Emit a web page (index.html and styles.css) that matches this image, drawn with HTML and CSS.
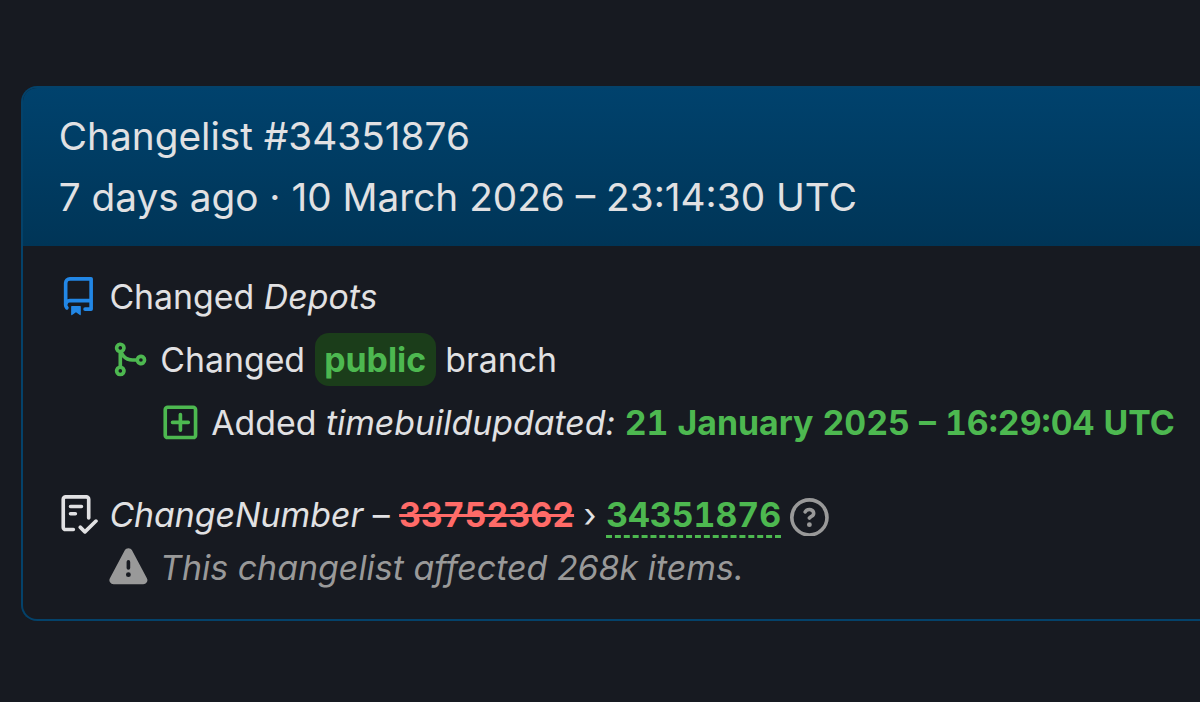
FILE: index.html
```html
<!DOCTYPE html>
<html lang="en">
<head>
    <meta charset="UTF-8">
    <meta name="viewport" content="width=device-width, initial-scale=1.0">
    <title>Changelist #34351876</title>
    <link rel="stylesheet" href="styles.css">
</head>
<body>
    <div class="panel">
        <header class="panel-heading">
            <div>Changelist #34351876</div>
            <div>7 days ago · 10 March 2026 – 23:14:30 UTC</div>
        </header>

        <div class="panel-body">
            <ul class="history">
                <li>
                    <div class="row">
                        <svg class="icon blue" viewBox="0 0 16 16"><path d="M2 2.5A2.5 2.5 0 0 1 4.5 0h8.75a.75.75 0 0 1 .75.75v12.5a.75.75 0 0 1-.75.75h-2.5a.75.75 0 0 1 0-1.5h1.75v-2h-8a1 1 0 0 0-.714 1.7.75.75 0 1 1-1.072 1.05A2.495 2.495 0 0 1 2 11.5Zm10.5-1h-8a1 1 0 0 0-1 1v6.708A2.486 2.486 0 0 1 4.5 9h8ZM5 12.25a.25.25 0 0 1 .25-.25h3.5a.25.25 0 0 1 .25.25v3.25a.25.25 0 0 1-.4.2l-1.45-1.087a.249.249 0 0 0-.3 0L5.4 15.7a.25.25 0 0 1-.4-.2Z"/></svg>
                        <span>Changed <i>Depots</i></span>
                    </div>
                    <ul>
                        <li>
                            <div class="row">
                                <svg class="icon green" viewBox="0 0 16 16"><path d="M5.45 5.154A4.25 4.25 0 0 0 9.25 7.5h1.378a2.251 2.251 0 1 1 0 1.5H9.25A5.734 5.734 0 0 1 5 7.123v3.505a2.25 2.25 0 1 1-1.5 0V5.372a2.25 2.25 0 1 1 1.95-.218ZM4.25 13.5a.75.75 0 1 0 0-1.5.75.75 0 0 0 0 1.5Zm8.5-4.5a.75.75 0 1 0 0-1.5.75.75 0 0 0 0 1.5ZM5 3.25a.75.75 0 1 0 0 .005V3.25Z"/></svg>
                                <span>Changed <b class="branch">public</b> branch</span>
                            </div>
                            <ul>
                                <li>
                                    <div class="row">
                                        <svg class="icon green" viewBox="0 0 16 16"><path d="M2.75 1h10.5c.966 0 1.75.784 1.75 1.75v10.5A1.75 1.75 0 0 1 13.25 15H2.75A1.75 1.75 0 0 1 1 13.25V2.75C1 1.784 1.784 1 2.75 1Zm10.5 1.5H2.75a.25.25 0 0 0-.25.25v10.5c0 .138.112.25.25.25h10.5a.25.25 0 0 0 .25-.25V2.75a.25.25 0 0 0-.25-.25ZM8 4a.75.75 0 0 1 .75.75v2.5h2.5a.75.75 0 0 1 0 1.5h-2.5v2.5a.75.75 0 0 1-1.5 0v-2.5h-2.5a.75.75 0 0 1 0-1.5h2.5v-2.5A.75.75 0 0 1 8 4Z"/></svg>
                                        <span>Added <i>timebuildupdated:</i> <b class="value green">21 January 2025 – 16:29:04 UTC</b></span>
                                    </div>
                                </li>
                            </ul>
                        </li>
                    </ul>
                </li>
                <li class="change-number">
                    <div class="row">
                        <svg class="icon" viewBox="0 0 16 16"><path d="M2.5 1.75v11.5c0 .138.112.25.25.25h3.17a.75.75 0 0 1 0 1.5H2.75A1.75 1.75 0 0 1 1 13.25V1.75C1 .784 1.784 0 2.75 0h8.5C12.216 0 13 .784 13 1.75v7.736a.75.75 0 0 1-1.5 0V1.75a.25.25 0 0 0-.25-.25h-8.5a.25.25 0 0 0-.25.25Zm13.274 9.537v-.001l-4.557 4.45a.75.75 0 0 1-1.055-.008l-1.943-1.95a.75.75 0 0 1 1.062-1.058l1.419 1.425 4.026-3.932a.75.75 0 1 1 1.048 1.074ZM4.75 4h4.5a.75.75 0 0 1 0 1.5h-4.5a.75.75 0 0 1 0-1.5ZM4 7.75A.75.75 0 0 1 4.75 7h2a.75.75 0 0 1 0 1.5h-2A.75.75 0 0 1 4 7.75Z"/></svg>
                        <span><i>ChangeNumber</i> – <del class="value">33752362</del> › <ins class="value">34351876</ins></span>
                        <svg class="icon help" viewBox="0 0 16 16"><path d="M0 8a8 8 0 1 1 16 0A8 8 0 0 1 0 8Zm8-6.5a6.5 6.5 0 1 0 0 13 6.5 6.5 0 0 0 0-13ZM6.92 6.085h.001a.749.749 0 1 1-1.342-.67c.169-.339.436-.701.849-.977C6.845 4.16 7.369 4 8 4a2.756 2.756 0 0 1 1.637.525c.503.377.863.965.863 1.725 0 .448-.115.83-.329 1.15-.205.307-.47.513-.692.662-.109.072-.22.138-.313.195l-.006.004a6.24 6.24 0 0 0-.26.16.952.952 0 0 0-.276.245.75.75 0 0 1-1.248-.832c.184-.264.42-.489.692-.661.103-.067.207-.132.313-.195l.007-.004c.1-.061.182-.11.258-.161a.969.969 0 0 0 .277-.245C8.96 6.514 9 6.427 9 6.25a.612.612 0 0 0-.262-.525A1.27 1.27 0 0 0 8 5.5c-.369 0-.595.09-.74.187a1.01 1.01 0 0 0-.34.398ZM9 11a1 1 0 1 1-2 0 1 1 0 0 1 2 0Z"/></svg>
                    </div>
                    <div class="row note">
                        <svg class="icon" viewBox="0 0 16 16"><path d="M6.457 1.047c.659-1.234 2.427-1.234 3.086 0l6.082 11.378A1.75 1.75 0 0 1 14.082 15H1.918a1.75 1.75 0 0 1-1.543-2.575ZM8 5a.75.75 0 0 0-.75.75v2.5a.75.75 0 0 0 1.5 0v-2.5A.75.75 0 0 0 8 5Zm1 6a1 1 0 1 0-2 0 1 1 0 0 0 2 0Z"/></svg>
                        <i>This changelist affected 268k items.</i>
                    </div>
                </li>
            </ul>
        </div>
    </div>
</body>
</html>
```
FILE: styles.css
```css
* {
    margin: 0;
    padding: 0;
    box-sizing: border-box;
}

body {
    font-family: Inter, sans-serif;
    font-size: 33.85px;
    line-height: 53px;
    color: #e1e1e3;
    background: #171a21;
    padding: 86px 0 0 20.5px;
    overflow: hidden;
    white-space: nowrap;
}

.panel {
    height: 535px;
    border: 2px solid #04426a;
    border-right: 0;
    border-radius: 16px 0 0 16px;
    overflow: hidden;
}

.panel-heading {
    height: 158px;
    padding: 17px 0 0 36.3px;
    font-size: 38.75px;
    line-height: 61px;
    background: linear-gradient(#00426d, #003557);
}

.panel-body {
    padding: 24px 0 0 36.3px;
}

.history ul {
    padding-left: 50.8px;
}

.history ul ul {
    padding-left: 51px;
}

ul {
    list-style: none;
}

.row {
    display: flex;
    align-items: center;
    height: 53px;
    margin-bottom: 10px;
}

.icon {
    flex: none;
    width: 38.8px;
    height: 38.8px;
    margin-right: 11.8px;
    fill: currentColor;
}

.blue {
    color: #2287e6;
}

.green {
    color: #4db850;
}

.value {
    font-weight: bold;
    font-variant-numeric: tabular-nums;
}

.branch {
    display: inline-block;
    padding: 0 9.6px;
    color: #4db850;
    background: #1b3d1a;
    border-radius: 14px;
}

.change-number {
    margin-top: 39px;
}

.change-number .row {
    margin-bottom: 0;
}

del {
    color: #ff6b68;
}

ins {
    color: #4db850;
    text-decoration: none;
    border-bottom: 3px dashed #4db850;
}

.help {
    margin: 5px 0 0 9px;
    color: #999;
}

.note {
    padding-left: 50.6px;
    font-size: 33.95px;
    color: #999;
}
```
